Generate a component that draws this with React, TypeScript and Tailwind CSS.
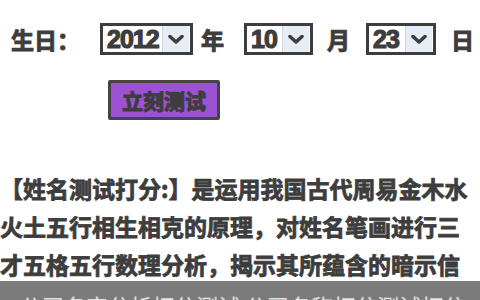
function Select({ value, width }: { value: string; width: string }) {
  return (
    <div className={`flex h-[32px] ${width} items-center border-[3px] border-[#3d3d3d] bg-white`}>
      <span className="flex-1 pl-[4px] font-['Liberation_Sans',sans-serif] text-[25px] font-bold leading-none tracking-[-1px] text-[#3d3d3d] [-webkit-text-stroke:1.2px_#3d3d3d]">
        {value}
      </span>
      <span className="mr-[1px] flex h-[26px] w-[27px] items-center justify-center border-l border-[#cfd6e0] bg-[#e7edf6]">
        <svg width="16" height="11" viewBox="0 0 16 11" fill="none">
          <path d="M2 2.5 L8 8 L14 2.5" stroke="#3d3d3d" strokeWidth="3.5" strokeLinecap="round" strokeLinejoin="round" />
        </svg>
      </span>
    </div>
  )
}

export default function App() {
  return (
    <div className="relative h-[300px] w-[480px] overflow-hidden bg-white font-['Noto_Sans_CJK_SC',sans-serif] text-[#3d3d3d]">
      {/* birthday row */}
      <div className="flex items-center pt-[23px] text-[23px] font-bold leading-none [-webkit-text-stroke:1px_#3d3d3d]">
        <span className="ml-[11px]">生日：</span>
        <div className="ml-[20px]">
          <Select value="2012" width="w-[93px]" />
        </div>
        <span className="ml-[8px]">年</span>
        <div className="ml-[20px]">
          <Select value="10" width="w-[69px]" />
        </div>
        <span className="ml-[14px]">月</span>
        <div className="ml-[16px]">
          <Select value="23" width="w-[70px]" />
        </div>
        <span className="ml-[15px]">日</span>
      </div>

      {/* test button */}
      <div className="mt-[25px] flex">
        <button className="ml-[108px] flex h-[40px] w-[112px] items-center justify-center rounded-[2px] border-[3px] border-[#444] bg-[#9d52d4] text-[21px] font-bold leading-none text-[#3d3d3d] [-webkit-text-stroke:1px_#3d3d3d]">
          立刻测试
        </button>
      </div>

      {/* description */}
      <p className="mt-[49px] w-[480px] text-[23px] font-bold leading-[38px] [-webkit-text-stroke:0.8px_#3d3d3d]">
        【姓名测试打分:】是运用我国古代周易金木水火土五行相生相克的原理，对姓名笔画进行三才五格五行数理分析，揭示其所蕴含的暗示信息。
      </p>

      {/* bottom overlay bar */}
      <div className="absolute left-0 top-[281px] h-[40px] w-full bg-[#7b7b7b] pl-[20px] pt-[13px] text-[22px] leading-none text-[#e2e2e2]">
        公司名字分析打分测试 公司名称打分测试打分
      </div>
    </div>
  )
}
